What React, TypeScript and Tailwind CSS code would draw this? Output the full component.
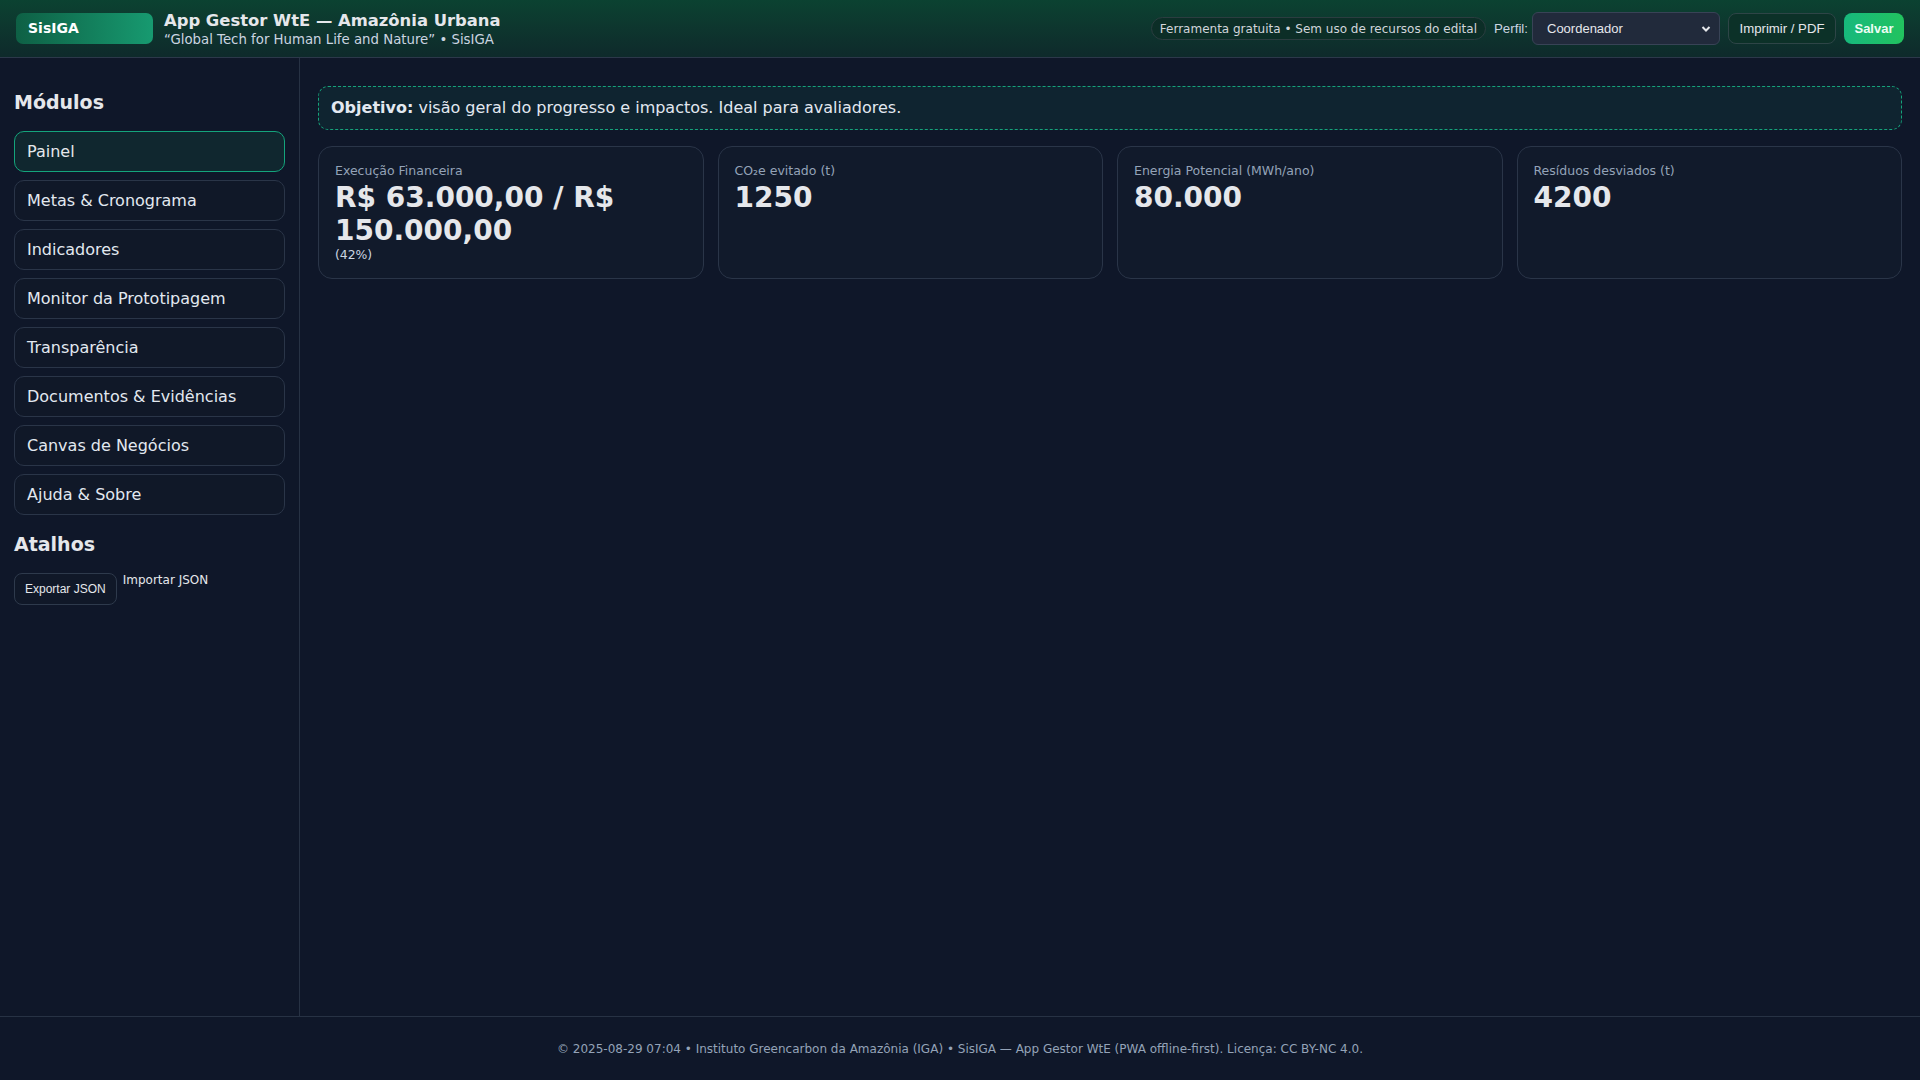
import React from "react";

const navItems = [
  "Painel",
  "Metas & Cronograma",
  "Indicadores",
  "Monitor da Prototipagem",
  "Transparência",
  "Documentos & Evidências",
  "Canvas de Negócios",
  "Ajuda & Sobre",
];

function Card({ label, value, sub }: { label: string; value: string; sub?: string }) {
  return (
    <div className="rounded-[14px] border border-[#2a3548] bg-[#111a2b] px-4 pt-4 pb-4">
      <div className="text-[12.5px] leading-[16px] text-[#94a3b8]">{label}</div>
      <div className="text-[28px] leading-[33px] font-bold text-[#e5e7eb] mt-[2px]">{value}</div>
      {sub && <div className="text-[12.4px] leading-[15px] text-[#cbd5e1]">{sub}</div>}
    </div>
  );
}

export default function App() {
  return (
    <div className="min-h-screen flex flex-col bg-[#0f1729] text-[#e5e7eb] font-['DejaVu_Sans',sans-serif]">
      <header className="h-[58px] shrink-0 border-b border-[#2c384a] bg-gradient-to-b from-[#0b4231] to-[#0e2a2b] px-4 flex items-center justify-between">
        <div className="flex items-center">
          <div className="w-[137px] h-[31px] rounded-[7px] bg-gradient-to-r from-[#0e6045] to-[#179a70] flex items-center pl-3 text-[14px] font-bold text-white">
            SisIGA
          </div>
          <div className="ml-[11px] flex flex-col pt-[2px]">
            <div className="text-[16.4px] leading-[20px] font-bold text-[#e5e7eb]">App Gestor WtE — Amazônia Urbana</div>
            <div className="text-[13.3px] leading-[18px] text-[#cbd5e1]">“Global Tech for Human Life and Nature” • SisIGA</div>
          </div>
        </div>
        <div className="flex items-center gap-2">
          <div className="h-[23px] px-[8px] rounded-full border border-[#2b3d40] bg-[#0c2e27] flex items-center text-[12px] text-[#d1d5db]">
            Ferramenta gratuita • Sem uso de recursos do edital
          </div>
          <div className="flex items-center gap-1">
            <span className="font-['Liberation_Sans',Arial,sans-serif] text-[13.3px] text-[#cbd5e1]">Perfil:</span>
            <div className="relative w-[188px] h-[33px] rounded-[6px] border border-[#384356] bg-[#212a3b] flex items-center pl-[14px] font-['Liberation_Sans',Arial,sans-serif] text-[13px] text-[#e5e7eb]">
              Coordenador
              <svg className="absolute right-[8px] top-[12px]" width="10" height="8" viewBox="0 0 10 8">
                <path d="M1.5 2 L5 5.5 L8.5 2" stroke="#e5e7eb" strokeWidth="2" fill="none" />
              </svg>
            </div>
          </div>
          <button className="h-[31px] w-[108px] rounded-[8px] border border-[#2e4547] bg-[#0c3128] font-['Liberation_Sans',Arial,sans-serif] text-[13.2px] text-[#e5e7eb]">
            Imprimir / PDF
          </button>
          <button className="h-[31px] w-[60px] rounded-[8px] bg-gradient-to-r from-[#17b87c] to-[#22c35e] font-['Liberation_Sans',Arial,sans-serif] text-[13px] font-bold text-[#ecfdf5]">
            Salvar
          </button>
        </div>
      </header>

      <div className="flex-1 flex">
        <aside className="w-[300px] shrink-0 border-r border-[#273244] px-[14px] pt-[30px]">
          <h2 className="text-[19px] leading-[28px] font-bold text-[#e5e7eb]">Módulos</h2>
          <nav className="mt-[15px] flex flex-col gap-[8px]">
            {navItems.map((item, i) => (
              <button
                key={item}
                className={
                  i === 0
                    ? "h-[41px] w-full rounded-[10px] border border-[#14a47c] bg-[#10272f] pl-[12px] pt-[1px] text-left text-[16px] text-[#e5e7eb]"
                    : "h-[41px] w-full rounded-[10px] border border-[#2a3548] bg-[#101828] pl-[12px] pt-[1px] text-left text-[16px] text-[#e2e8f0]"
                }
              >
                {item}
              </button>
            ))}
          </nav>
          <h2 className="mt-[15px] text-[19px] leading-[28px] font-bold text-[#e5e7eb]">Atalhos</h2>
          <div className="mt-[15px] flex items-start gap-[6px]">
            <button className="h-[32px] px-[10px] rounded-[8px] border border-[#2e3a4c] bg-[#101828] font-['Liberation_Sans',Arial,sans-serif] text-[12px] text-[#e5e7eb]">
              Exportar JSON
            </button>
            <span className="text-[12px] leading-[14px] text-[#e5e7eb]">Importar JSON</span>
          </div>
        </aside>

        <main className="flex-1 px-[18px] pt-[28px]">
          <div className="h-[44px] rounded-[10px] border border-dashed border-[#16a37b] bg-[#0f2430] pl-[12px] flex items-center text-[16px] text-[#e2e8f0]">
            <span className="font-bold">Objetivo:</span>
            <span>&nbsp;visão geral do progresso e impactos. Ideal para avaliadores.</span>
          </div>
          <div className="mt-4 grid grid-cols-4 gap-[14px]">
            <Card label="Execução Financeira" value="R$ 63.000,00 / R$ 150.000,00" sub="(42%)" />
            <Card label="CO₂e evitado (t)" value="1250" />
            <Card label="Energia Potencial (MWh/ano)" value="80.000" />
            <Card label="Resíduos desviados (t)" value="4200" />
          </div>
        </main>
      </div>

      <footer className="h-[64px] shrink-0 border-t border-[#273244] flex items-center justify-center text-[12px] text-[#94a3b8]">
        © 2025-08-29 07:04 • Instituto Greencarbon da Amazônia (IGA) • SisIGA — App Gestor WtE (PWA offline-first). Licença: CC BY-NC 4.0.
      </footer>
    </div>
  );
}
